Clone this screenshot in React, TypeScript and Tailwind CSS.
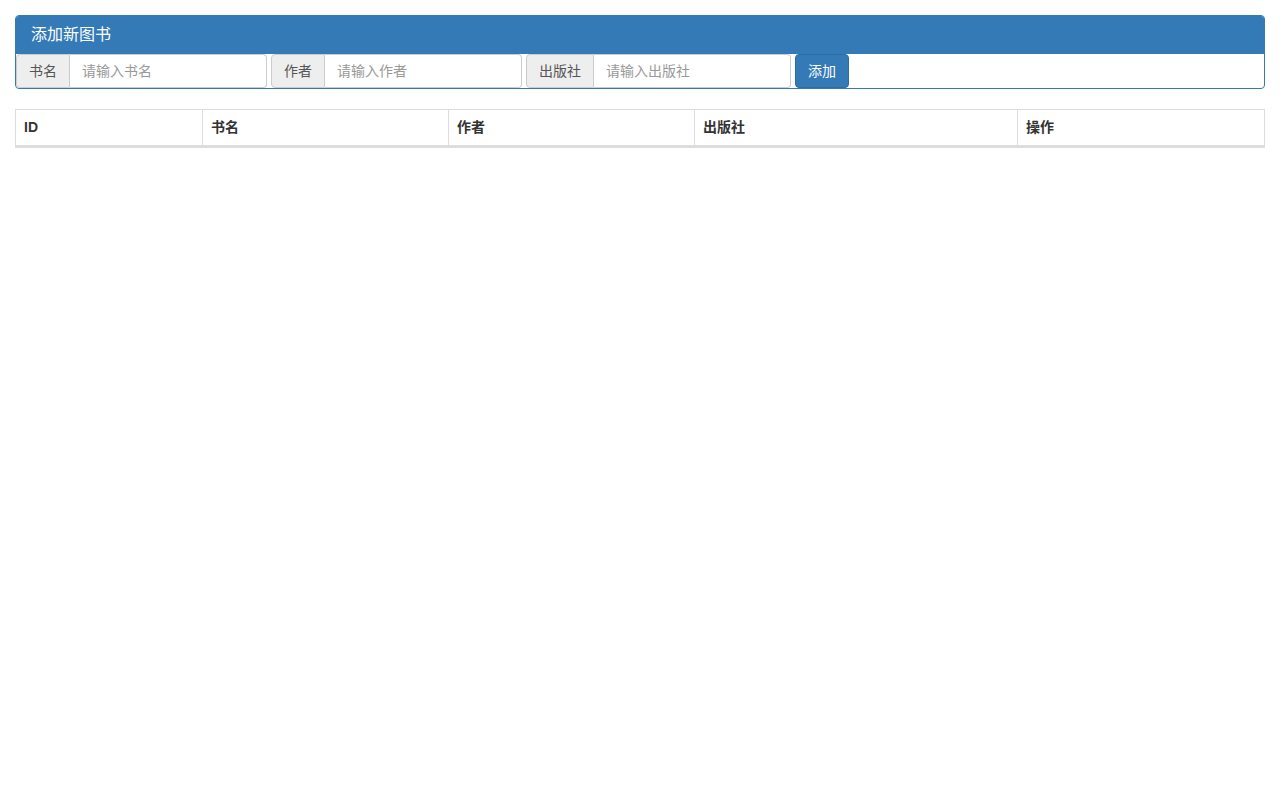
export default function App() {
  const groups = [
    { label: "书名", ph: "请输入书名", w: "w-[251px]", aw: "w-[54px]" },
    { label: "作者", ph: "请输入作者", w: "w-[251px]", aw: "w-[54px]" },
    { label: "出版社", ph: "请输入出版社", w: "w-[265px]", aw: "w-[68px]" },
  ];
  const cols = [
    { t: "ID", w: "w-[186px]" },
    { t: "书名", w: "w-[246px]" },
    { t: "作者", w: "w-[246px]" },
    { t: "出版社", w: "w-[323px]" },
    { t: "操作", w: "" },
  ];
  return (
    <div className="min-h-screen bg-white p-[15px] text-[14px] text-[#333]" style={{ fontFamily: '"Liberation Sans", "Noto Sans CJK SC", sans-serif' }}>
      <div className="rounded-[4px] border border-[#337ab7] overflow-hidden">
        <div className="bg-[#337ab7] text-white text-[16px] h-[38px] flex items-center px-[15px]">添加新图书</div>
        <div className="flex items-center gap-[4px] h-[34px]">
          {groups.map((g) => (
            <div key={g.label} className={`flex h-[34px] ${g.w}`}>
              <div className={`${g.aw} shrink-0 flex items-center justify-center bg-[#eee] border border-[#ccc] rounded-l-[4px] text-[#555]`}>{g.label}</div>
              <div className="flex-1 flex items-center px-[12px] border border-l-0 border-[#ccc] rounded-r-[4px] text-[#999]">{g.ph}</div>
            </div>
          ))}
          <button className="h-[34px] w-[54px] bg-[#337ab7] border border-[#2e6da4] rounded-[4px] text-white">添加</button>
        </div>
      </div>
      <div className="mt-[20px] border border-[#ddd] flex">
        {cols.map((c, i) => (
          <div key={c.t} className={`${c.w} ${c.w ? "shrink-0" : "flex-1"} ${i > 0 ? "border-l border-[#ddd]" : ""} h-[37px] border-b-2 border-b-[#ddd] flex items-center px-[8px] font-bold`}>{c.t}</div>
        ))}
      </div>
    </div>
  );
}
